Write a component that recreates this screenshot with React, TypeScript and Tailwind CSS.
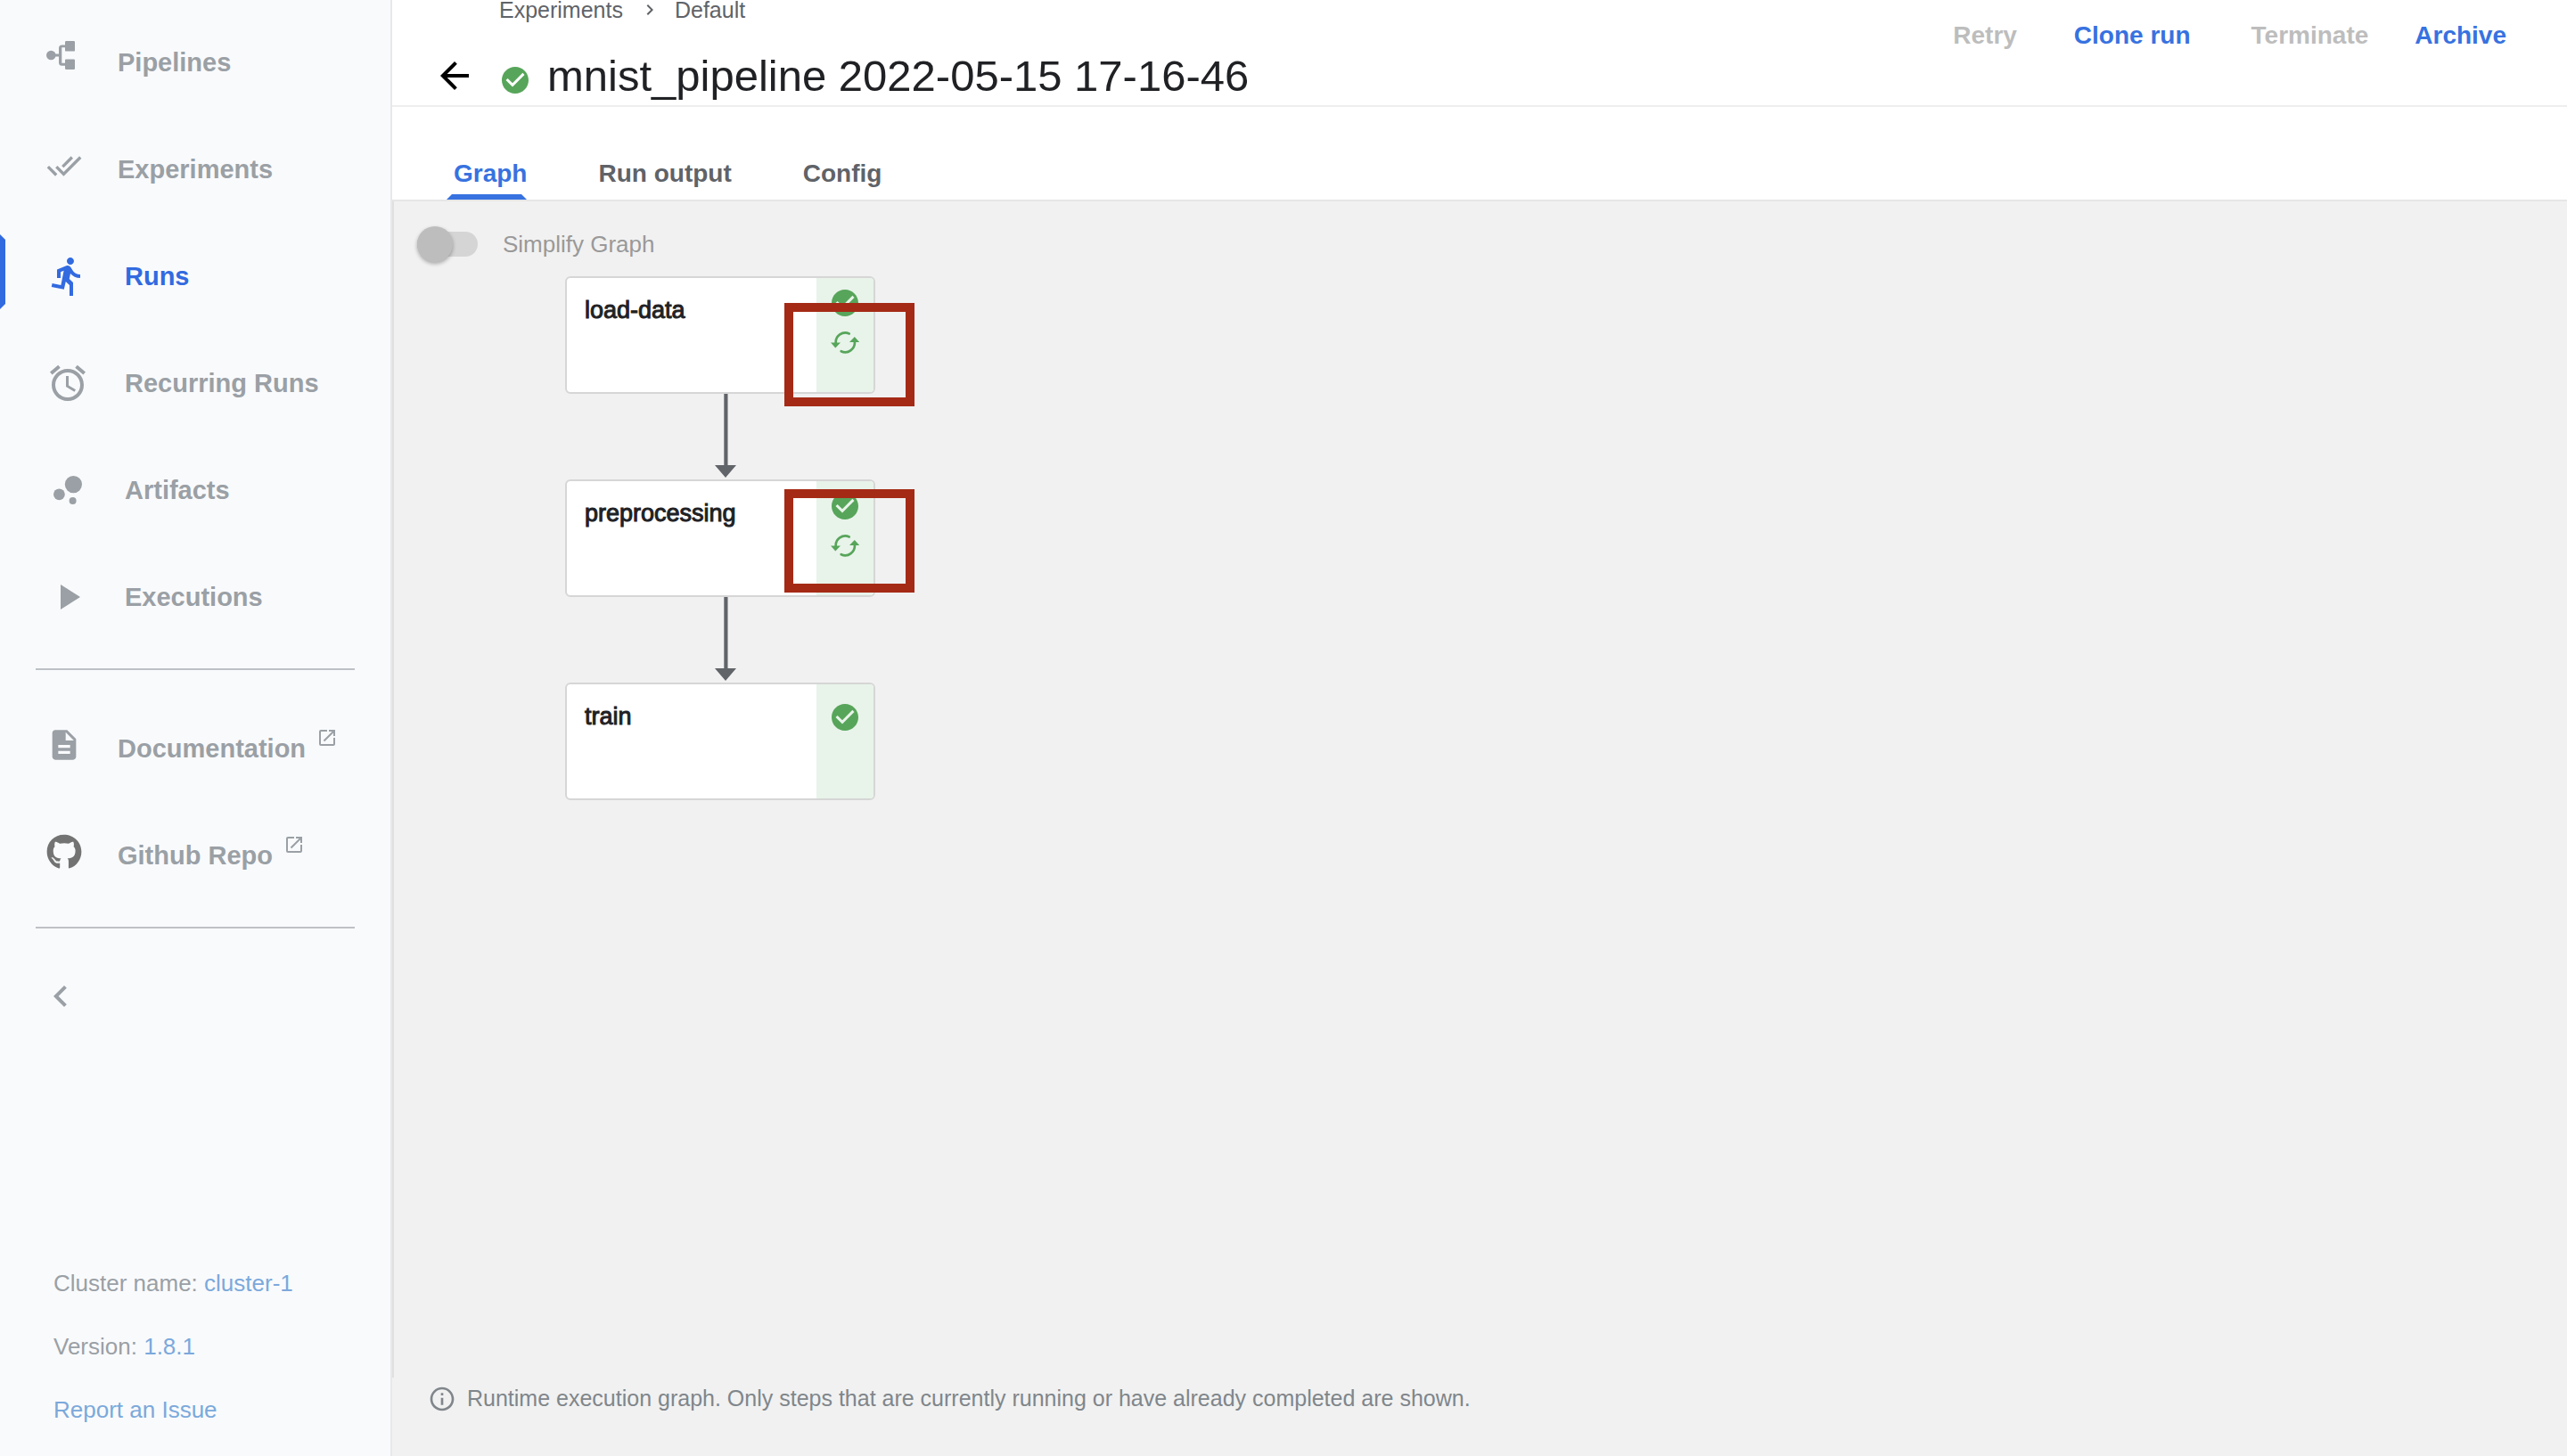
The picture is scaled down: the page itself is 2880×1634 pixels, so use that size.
import React from "react";
import {
  MdAlarm,
  MdArrowBack,
  MdBubbleChart,
  MdCheckCircle,
  MdChevronLeft,
  MdChevronRight,
  MdDescription,
  MdDirectionsRun,
  MdDoneAll,
  MdInfoOutline,
  MdOpenInNew,
  MdPlayArrow,
} from "react-icons/md";
import { FaGithub } from "react-icons/fa";
import { clsx } from "clsx";

function PipelinesIcon({ className }: { className?: string }) {
  return (
    <svg viewBox="0 0 40 40" className={className} fill="currentColor" aria-hidden="true">
      <circle cx="5.3" cy="16" r="5.3" />
      <path d="M9 14.5h5V8a3.500 3.500 0 0 1 3.500-3.500H21V1.200Q21 0 22.200 0H30.800Q32 0 32 1.200V10.400Q32 11.600 30.800 11.600H22.200Q21 11.600 21 10.400V7.300H17.300V24.800H21V21.600Q21 20.400 22.200 20.400H30.800Q32 20.400 32 21.600V30.800Q32 32 30.800 32H22.200Q21 32 21 30.800V27.800H17.500A3.500 3.500 0 0 1 14 24.300V17.500H9z" />
    </svg>
  );
}

function CachedIcon() {
  return (
    <svg viewBox="0 0 32 25" className="h-[25px] w-8" fill="none" role="img" aria-label="Cached">
      <path d="M5.700 13A10.700 10.700 0 0 1 20.700 2.400" stroke="currentColor" strokeWidth="2.700" strokeLinecap="round" />
      <path d="M26.800 11A10.700 10.700 0 0 1 11.700 22.200" stroke="currentColor" strokeWidth="2.700" strokeLinecap="round" />
      <path d="M26.800 6L32.200 12H21zM5.300 18.400L0 12.400H11z" fill="currentColor" />
    </svg>
  );
}

type NavItem = {
  label: string;
  icon: React.ComponentType<{ className?: string }>;
  large?: boolean;
  active?: boolean;
  external?: boolean;
  dark?: boolean;
};

const mainNav: NavItem[] = [
  { label: "Pipelines", icon: PipelinesIcon },
  { label: "Experiments", icon: MdDoneAll },
  { label: "Runs", icon: MdDirectionsRun, large: true, active: true },
  { label: "Recurring Runs", icon: MdAlarm, large: true },
  { label: "Artifacts", icon: MdBubbleChart, large: true },
  { label: "Executions", icon: MdPlayArrow, large: true },
];

const externalNav: NavItem[] = [
  { label: "Documentation", icon: MdDescription, external: true },
  { label: "Github Repo", icon: FaGithub, external: true, dark: true },
];

function NavLink({ label, icon: Icon, large, active, external, dark }: NavItem) {
  return (
    <a
      href="#"
      aria-current={active ? "page" : undefined}
      className={clsx(
        "relative flex h-[120px] items-center pl-[52px] text-[29px] font-bold",
        active ? "text-[#326ae0]" : "text-[#9aa0a5]",
      )}
    >
      {active && (
        <span className="absolute top-3 left-0 h-[84px] w-0 border-y-[6px] border-l-[6px] border-y-transparent border-l-[#326ae0]" />
      )}
      <Icon
        className={clsx(
          "mr-10 shrink-0",
          large ? "mb-[2px] size-12" : "mb-[10px] size-10",
          dark && "text-[#737373]",
        )}
      />
      <span>{label}</span>
      {external && <MdOpenInNew className="mb-[26px] ml-3 size-6" />}
    </a>
  );
}

function Sidebar() {
  return (
    <aside className="flex w-[440px] shrink-0 flex-col border-r-2 border-[#e8e8ec] bg-[#f9fafc] pt-[11px]">
      <nav aria-label="Main">
        {mainNav.map((item) => (
          <NavLink key={item.label} {...item} />
        ))}
        <hr className="mx-10 mt-[19px] mb-[29px] border-t-2 border-[#bdc1c6]" />
        {externalNav.map((item) => (
          <NavLink key={item.label} {...item} />
        ))}
        <hr className="mx-10 mt-[19px] border-t-2 border-[#bdc1c6]" />
      </nav>
      <button type="button" aria-label="Collapse menu" className="mt-[52px] ml-11 size-12 text-[#9aa0a5]">
        <MdChevronLeft className="size-12" />
      </button>
      <div className="mt-auto flex flex-col gap-[31px] pb-8 pl-[60px] text-[26px] leading-10 text-[#9aa0a5]">
        <p>
          Cluster name:{" "}
          <a href="#" className="text-[#7ba9db]">cluster-1</a>
        </p>
        <p>
          Version:{" "}
          <a href="#" className="text-[#7ba9db]">1.8.1</a>
        </p>
        <p>
          <a href="#" className="text-[#7ba9db]">Report an Issue</a>
        </p>
      </div>
    </aside>
  );
}

function Header() {
  return (
    <header className="flex h-[120px] justify-between border-b-2 border-[#eeeeee]">
      <div className="flex flex-col">
        <nav aria-label="Breadcrumb" className="flex items-center pl-[120px] text-[25px] leading-[22px] text-[#5f6368]">
          <a href="#">Experiments</a>
          <MdChevronRight className="mr-4 ml-[18px] -my-1 size-6" />
          <a href="#">Default</a>
        </nav>
        <div className="mt-[30px] flex h-[66px] items-center pl-[46px]">
          <button type="button" aria-label="Back" className="size-12 text-black">
            <MdArrowBack className="size-12" />
          </button>
          <MdCheckCircle className="mt-[10px] ml-[26px] size-9 text-[#57a55a]" />
          <h1 className="ml-[18px] text-[49px] leading-[66px] whitespace-nowrap text-[#202124]">
            mnist_pipeline 2022-05-15 17-16-46
          </h1>
        </div>
      </div>
      <div className="flex h-20 items-center pr-[52px] text-[28px] font-bold text-[#3772e0]">
        <button type="button" disabled className="px-4 text-[#bdbdbd]">Retry</button>
        <button type="button" className="ml-8 px-4">Clone run</button>
        <button type="button" disabled className="ml-9 px-4 text-[#bdbdbd]">Terminate</button>
        <button type="button" className="ml-5 px-4">Archive</button>
      </div>
    </header>
  );
}

function Tabs() {
  return (
    <div role="tablist" className="flex h-[106px] items-end gap-20 border-b-2 border-[#e6e6e6] pl-[69px] text-[28px] leading-[58px] font-bold text-[#5f6368]">
      <button type="button" role="tab" aria-selected="true" className="relative text-[#3772e0]">
        Graph
        <span className="absolute right-0 -left-2 bottom-0 border-x-[6px] border-b-[6px] border-x-transparent border-b-[#3772e0]" />
      </button>
      <button type="button" role="tab" aria-selected="false">Run output</button>
      <button type="button" role="tab" aria-selected="false">Config</button>
    </div>
  );
}

type Step = { name: string; cached?: boolean; mark?: string };

const steps: Step[] = [
  { name: "load-data", cached: true, mark: "top-7" },
  { name: "preprocessing", cached: true, mark: "top-[9px]" },
  { name: "train" },
];

function Edge() {
  return (
    <svg viewBox="0 0 24 96" className="ml-[168px] h-24 w-6" fill="#616469" aria-hidden="true">
      <path d="M10.300 0h4.200v80H24L12 94 0 80h10.300z" />
    </svg>
  );
}

function Node({ name, cached, mark }: Step) {
  return (
    <div className="relative flex h-[132px] w-[348px] rounded-md border-2 border-[#d6d6d6] bg-white">
      <span className="flex-1 pt-4 pl-5 text-[27px] leading-10 text-[#202124] [-webkit-text-stroke:1px_#202124]">
        {name}
      </span>
      <div className={clsx("flex w-16 flex-col items-center gap-[14px] rounded-r-sm bg-[#e8f3ea] text-[#57a55a]", cached ? "pt-[10px]" : "pt-[19px]")}>
        <MdCheckCircle className="size-9" />
        {cached && <CachedIcon />}
      </div>
      {mark && (
        <div className={clsx("absolute left-[244px] h-[116px] w-[146px] border-10 border-[#a52a16]", mark)} />
      )}
    </div>
  );
}

function Graph() {
  return (
    <section aria-label="Graph" className="flex-1 border-l-2 border-[#e0e0e0]">
      <label className="ml-[26px] flex h-[84px] items-center pt-3 text-[26px] text-[#999999]">
        <span className="relative flex h-10 w-[68px] items-center">
          <input type="checkbox" role="switch" className="peer absolute inset-0 z-10 opacity-0" />
          <span className="h-7 w-full rounded-full bg-[#d5d5d5]" />
          <span className="absolute left-0 size-10 rounded-full bg-[#bdbdbd] shadow-[0_2px_4px_rgba(0,0,0,0.3)] peer-checked:left-7" />
        </span>
        <span className="ml-7">Simplify Graph</span>
      </label>
      <div className="ml-48 flex flex-col items-start">
        {steps.map((step, i) => (
          <React.Fragment key={step.name}>
            {i > 0 && <Edge />}
            <Node {...step} />
          </React.Fragment>
        ))}
      </div>
    </section>
  );
}

export default function App() {
  return (
    <div className="flex min-h-screen bg-white font-['Liberation_Sans',Arial,sans-serif]">
      <Sidebar />
      <main className="flex min-w-0 flex-1 flex-col">
        <Header />
        <Tabs />
        <div className="flex flex-1 flex-col bg-[#f1f1f1]">
          <Graph />
          <footer className="flex h-[88px] items-center gap-3 pb-10 pl-10 text-[25px] text-[#80868b]">
            <MdInfoOutline className="size-8 shrink-0" />
            <p>Runtime execution graph. Only steps that are currently running or have already completed are shown.</p>
          </footer>
        </div>
      </main>
    </div>
  );
}
